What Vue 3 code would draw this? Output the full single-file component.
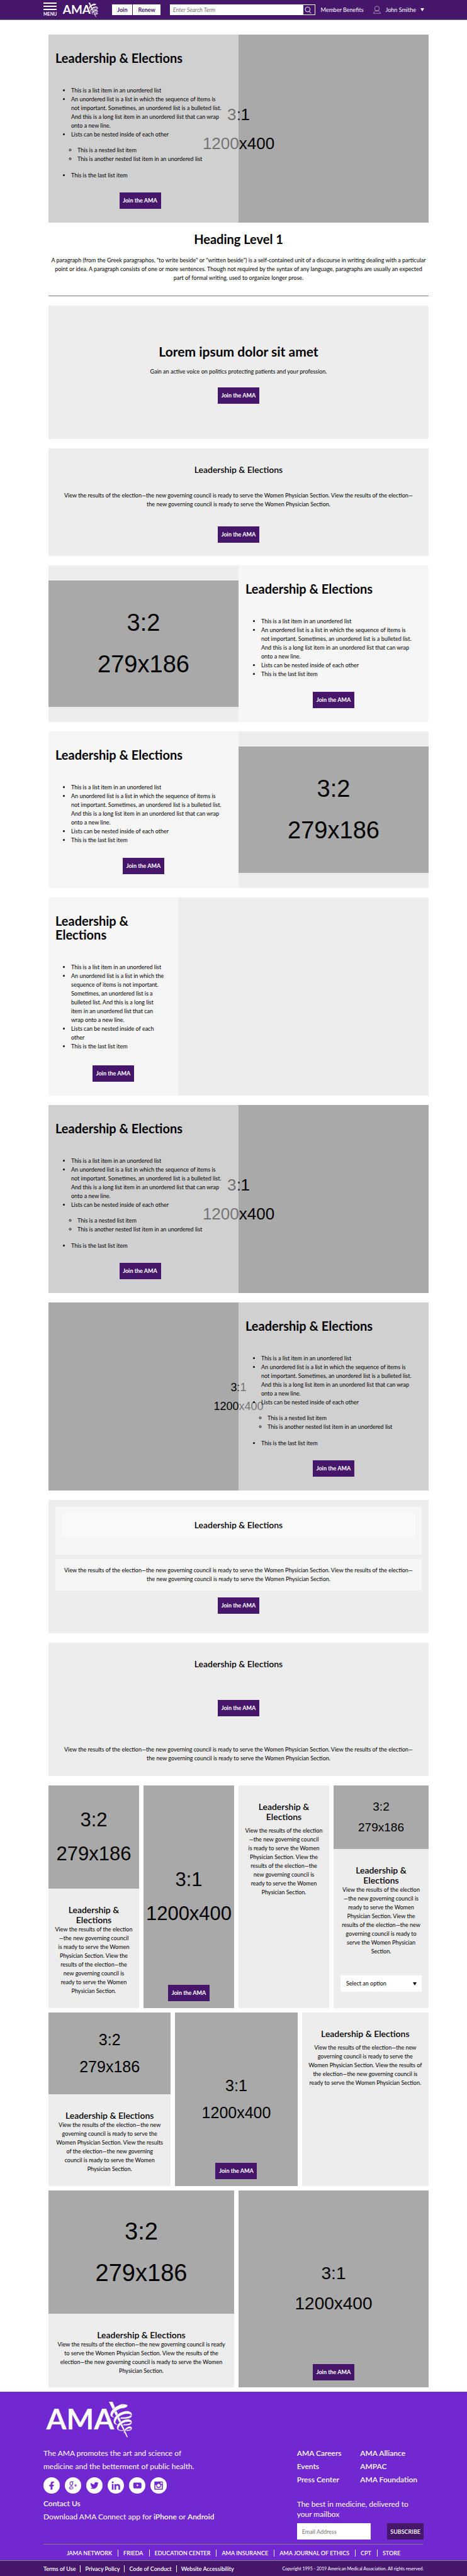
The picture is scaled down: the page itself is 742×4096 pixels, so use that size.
<script setup>
const blurb =
  'View the results of the election—the new governing council is ready to serve the Women Physician Section. View the results of the election—the new governing council is ready to serve the Women Physician Section.'

const narrowBlurb = `View the results of the election
—the new governing council
is ready to serve the Women
Physician Section. View the
results of the election—the
new governing council is
ready to serve the Women
Physician Section.`

const selectBlurb = `View the results of the election
—the new governing council is
ready to serve the Women
Physician Section. View the
results of the election—the new
governing council is ready to
serve the Women Physician
Section.`

const thirdBlurb = `View the results of the election—the new
governing council is ready to serve the
Women Physician Section. View the results
of the election—the new governing
council is ready to serve the Women
Physician Section.`

const thirdTextBlurb = `View the results of the election—the new
governing council is ready to serve the
Women Physician Section. View the results of
the election—the new governing council is
ready to serve the Women Physician Section.`

const halfBlurb = `View the results of the election—the new governing council is ready
to serve the Women Physician Section. View the results of the
election—the new governing council is ready to serve the Women
Physician Section.`

const items = [
  { text: 'This is a list item in an unordered list' },
  {
    text: `An unordered list is a list in which the sequence of items is
not important. Sometimes, an unordered list is a bulleted list.
And this is a long list item in an unordered list that can wrap
onto a new line.`
  },
  { text: 'Lists can be nested inside of each other' },
  { text: 'This is the last list item' }
]

const narrowItems = [
  items[0],
  {
    text: `An unordered list is a list in which the
sequence of items is not important.
Sometimes, an unordered list is a
bulleted list. And this is a long list
item in an unordered list that can
wrap onto a new line.`
  },
  { text: `Lists can be nested inside of each
other` },
  items[3]
]

const nestedItems = items.map((item, i) =>
  i === 2
    ? { ...item, children: ['This is a nested list item', 'This is another nested list item in an unordered list'] }
    : item
)

const features = [
  { kind: 'split flip', items },
  { kind: 'split', items },
  { kind: 'third', items: narrowItems },
  { kind: 'cover', items: nestedItems },
  { kind: 'cover flip', items: nestedItems }
]

const staff = 'M227 22H238L283.500 127.500H280.500Z'
const coils = [
  'M283 33C281 29 274 29.500 268 28C256 30 231 44 231 60C231 65 236 69 245 69C240 67 238 65 238 62C240 54 251 45 266 41.500C274 42 283 38 283 33Z',
  'M296 61C297 70 285 73 275 73C268 73 262 73 260 72L264 67.500C274 69 287 67 293 61Z',
  'M296 61C296 54 289 49.300 281 49.300C265 49.300 241 62 241 81C241 87 245 91 257 92C250 89 246 86 247 82C249 70 266 58.500 281 58.300C289 58 293 60 294.500 64Z',
  'M296 83C296 90 288 92.500 281 92.700C275 93 270 93 268.500 92.500L272 88C280 89 288 88 293 83Z',
  'M296 83C296 77 290 74 283 74C270 74 250.700 85 250.700 99C250.700 106 256 109.500 271 109.300L270 106C262 107 255.500 106 255.500 102C257 92 270 82.500 284 82C290 82 294 83 295 86Z',
  'M296 101C296 108 288 109.700 277 109.300L280 105C286 106 292 105 294 101Z',
  'M296 101C296 97 292 95 289 95C281 95 271 105 271 112C271 115 271.500 117.500 272 118C273 112 279 102.500 288 102C292 102 294 103 295 104Z'
]

const careers = ['AMA Careers', 'AMA Alliance', 'Events', 'AMPAC', 'Press Center', 'AMA Foundation']
const network = ['JAMA NETWORK', 'FRIEDA', 'EDUCATION CENTER', 'AMA INSURANCE', 'AMA JOURNAL OF ETHICS', 'CPT', 'STORE']
const legal = ['Terms of Use', 'Privacy Policy', 'Code of Conduct', 'Website Accessibility']
</script>

<template>
  <header class="top">
    <button class="menu" type="button">
      <span class="bars"><i></i><i></i><i></i></span>
      MENU
    </button>
    <a class="brand" href="#" aria-label="AMA">
      <svg viewBox="32 22 266 107">
        <text x="243" y="105" text-anchor="end" class="logo-text">AMA</text>
        <path :d="staff" />
        <path v-for="d in coils" :key="d" :d="d" class="coil" />
      </svg>
    </a>
    <div class="join">
      <button type="button">Join</button>
      <button type="button">Renew</button>
    </div>
    <form class="search" @submit.prevent>
      <input type="search" aria-label="Search" placeholder="Enter Search Term" />
      <button type="submit" aria-label="Search">
        <svg viewBox="0 0 35 28"><circle cx="14" cy="12" r="8" /><path d="M19 18L25 25" /></svg>
      </button>
    </form>
    <a class="benefits" href="#">Member Benefits</a>
    <button class="user" type="button">
      <svg viewBox="0 0 24 26"><circle cx="12" cy="9" r="7.500" /><path d="M1 24.500C2 19 6 16.500 12 16.500S22 19 23 24.500Z" /></svg>
      John Smithe
      <span class="caret white"></span>
    </button>
  </header>

  <main>
    <section class="feature cover">
      <div class="photo"><span>3:1</span><span>1200x400</span></div>
      <div class="copy">
        <h2>Leadership &amp; Elections</h2>
        <ul>
          <li v-for="item in nestedItems" :key="item.text">
            <span>{{ item.text }}</span>
            <ul v-if="item.children">
              <li v-for="child in item.children" :key="child">{{ child }}</li>
            </ul>
          </li>
        </ul>
        <button class="btn" type="button">Join the AMA</button>
      </div>
    </section>

    <section class="intro">
      <h1>Heading Level 1</h1>
      <p>
        A paragraph (from the Greek paragraphos, "to write beside" or "written beside") is a self-contained unit of a
        discourse in writing dealing with a particular<br />
        point or idea. A paragraph consists of one or more sentences. Though not required by the syntax of any language,
        paragraphs are usually an expected<br />
        part of formal writing, used to organize longer prose.
      </p>
    </section>
    <hr />

    <section class="block lorem">
      <h2>Lorem ipsum dolor sit amet</h2>
      <p>Gain an active voice on politics protecting patients and your profession.</p>
      <button class="btn" type="button">Join the AMA</button>
    </section>

    <section class="block plain">
      <h3>Leadership &amp; Elections</h3>
      <p>{{ blurb }}</p>
      <button class="btn" type="button">Join the AMA</button>
    </section>

    <section v-for="(f, i) in features" :key="i" class="feature" :class="f.kind">
      <div class="photo">
        <template v-if="f.kind.startsWith('cover')"><span>3:1</span><span>1200x400</span></template>
        <div v-else-if="f.kind.startsWith('split')" class="ph large"><span>3:2</span><span>279x186</span></div>
      </div>
      <div class="copy">
        <h2>Leadership &amp; Elections</h2>
        <ul>
          <li v-for="item in f.items" :key="item.text">
            <span>{{ item.text }}</span>
            <ul v-if="item.children">
              <li v-for="child in item.children" :key="child">{{ child }}</li>
            </ul>
          </li>
        </ul>
        <button class="btn" type="button">Join the AMA</button>
      </div>
    </section>

    <section class="block boxed">
      <div class="box">
        <h3>Leadership &amp; Elections</h3>
      </div>
      <p>{{ blurb }}</p>
      <button class="btn" type="button">Join the AMA</button>
    </section>

    <section class="block reversed">
      <h3>Leadership &amp; Elections</h3>
      <button class="btn" type="button">Join the AMA</button>
      <p>{{ blurb }}</p>
    </section>

    <div class="cards four">
      <article>
        <div class="ph tall"><span>3:2</span><span>279x186</span></div>
        <h3>Leadership &amp; Elections</h3>
        <p>{{ narrowBlurb }}</p>
      </article>
      <article class="dark">
        <div class="ph tall"><span>3:1</span><span>1200x400</span></div>
        <button class="btn" type="button">Join the AMA</button>
      </article>
      <article class="text">
        <h3>Leadership &amp; Elections</h3>
        <p>{{ narrowBlurb }}</p>
      </article>
      <article>
        <div class="ph small"><span>3:2</span><span>279x186</span></div>
        <h3>Leadership &amp; Elections</h3>
        <p>{{ selectBlurb }}</p>
        <div class="select">
          <select aria-label="Option">
            <option>Select an option</option>
          </select>
          <span class="caret"></span>
        </div>
      </article>
    </div>

    <div class="cards three">
      <article>
        <div class="ph medium"><span>3:2</span><span>279x186</span></div>
        <h3>Leadership &amp; Elections</h3>
        <p>{{ thirdBlurb }}</p>
      </article>
      <article class="dark">
        <div class="ph medium"><span>3:1</span><span>1200x400</span></div>
        <button class="btn" type="button">Join the AMA</button>
      </article>
      <article class="text">
        <h3>Leadership &amp; Elections</h3>
        <p>{{ thirdTextBlurb }}</p>
      </article>
    </div>

    <div class="cards two">
      <article>
        <div class="ph large"><span>3:2</span><span>279x186</span></div>
        <h3>Leadership &amp; Elections</h3>
        <p>{{ halfBlurb }}</p>
      </article>
      <article class="dark">
        <div class="ph wide"><span>3:1</span><span>1200x400</span></div>
        <button class="btn" type="button">Join the AMA</button>
      </article>
    </div>
  </main>

  <footer>
    <div class="inner">
      <a class="brand" href="#" aria-label="AMA">
        <svg viewBox="32 22 266 107">
          <text x="243" y="105" text-anchor="end" class="logo-text">AMA</text>
          <path :d="staff" />
          <path v-for="d in coils" :key="d" :d="d" class="coil" />
          <circle cx="268" cy="31.500" r="1.200" class="eye" />
        </svg>
      </a>
      <div class="columns">
        <div class="about">
          <p>The AMA promotes the art and science of<br />medicine and the betterment of public health.</p>
          <nav class="social" aria-label="Social">
            <a href="#" aria-label="Facebook">
              <svg viewBox="0 0 50 50"><path d="M32 13H29C24 13 22 16 22 20V23H18V28H22V38H27.500V28H31L32 23H27.500V20.500C27.500 18.500 28.500 17.500 30 17.500H32Z" /></svg>
            </a>
            <a href="#" aria-label="Google Plus">
              <svg viewBox="0 0 50 50"><g class="line"><ellipse cx="20" cy="19" rx="4.500" ry="5" /><path d="M20 13.500H27M22 24C18 26 18 27 22 29C27 31 26 36 19 36C12 36 12 30 20 29.500M29 25H37M33 21V29" /></g></svg>
            </a>
            <a href="#" aria-label="Twitter">
              <svg viewBox="0 0 50 50"><path d="M14 17C17 20 21 22 25 22C24 17 28 15 30 15C32 15 33 16 34 17L37 15.500L35.500 18.500L37.500 18L35 21C35 29 29 35 22 35C18 35 15 34 13 33C16 33 18 32 20 31C17 31 16 29 15 27H17C14 26 13 24 13 22L15 22.500C13 21 13 19 14 17Z" /></svg>
            </a>
            <a href="#" aria-label="LinkedIn">
              <svg viewBox="0 0 50 50"><circle cx="15.500" cy="15.500" r="3" /><path d="M13 21H18V38H13ZM21 21H26V23.500C29 19 38 20 38 28V38H33V29C33 24 26 24 26 29V38H21Z" /></svg>
            </a>
            <a href="#" aria-label="YouTube">
              <svg viewBox="0 0 50 50"><path fill-rule="evenodd" d="M16 16.500H35Q38 17 38 20V30Q38 33.500 35 34H16Q13 33.500 13 30V20Q13 17 16 16.500ZM23.500 21V28L30 24.500Z" /></svg>
            </a>
            <a href="#" aria-label="Instagram">
              <svg viewBox="0 0 50 50"><path fill-rule="evenodd" d="M14 13H36Q38 13 38 15V36Q38 38 36 38H14Q12 38 12 36V15Q12 13 14 13ZM31 16V20H36V16ZM15 24V35H35V24H32C34 36 16 36 18 24ZM25 20A5 5 0 1 0 25.100 20Z" /></svg>
            </a>
          </nav>
          <p><a href="#">Contact Us</a></p>
          <p>Download AMA Connect app for <a href="#">iPhone</a> or <a href="#">Android</a></p>
        </div>
        <div class="more">
          <nav class="careers" aria-label="AMA sites">
            <a v-for="link in careers" :key="link" href="#">{{ link }}</a>
          </nav>
          <form @submit.prevent>
            <label for="email">The best in medicine, delivered to<br />your mailbox</label>
            <div class="signup">
              <input id="email" type="email" placeholder="Email Address" />
              <button type="submit">SUBSCRIBE</button>
            </div>
          </form>
        </div>
      </div>
      <nav class="network bar" aria-label="Network">
        <a v-for="link in network" :key="link" href="#">{{ link }}</a>
      </nav>
    </div>
    <div class="bottom">
      <nav class="legal bar" aria-label="Legal">
        <a v-for="link in legal" :key="link" href="#">{{ link }}</a>
      </nav>
      <small>Copyright 1995 - 2019 American Medical Association. All rights reserved.</small>
    </div>
  </footer>
</template>

<style>
body {
  margin: 0;
  background: #fff;
}
#app {
  font-family: Lato, 'Open Sans', sans-serif;
  font-size: 9px;
  line-height: 14px;
  color: #000;
}
</style>

<style scoped>
h1, h2, h3, p, ul { margin: 0; padding: 0; }
a { color: inherit; text-decoration: none; }
button, input, select { font: inherit; border: 0; border-radius: 0; margin: 0; padding: 0; }
button { cursor: pointer; }
.logo-text { font-family: Lato, sans-serif; font-weight: 700; font-size: 87px; }
.coil { stroke: var(--ground); stroke-width: 1; }
.eye { fill: var(--ground); }

.top {
  --ground: #46166b;
  display: flex;
  align-items: center;
  height: 31px;
  padding: 0 68px 0 69px;
  background: #46166b;
  border-bottom: 1px solid #808080;
  color: #fff;
}
.menu {
  display: flex;
  flex-direction: column;
  align-items: center;
  background: none;
  color: #fff;
  font-size: 7px;
  line-height: 9px;
  font-weight: 700;
}
.bars { display: grid; gap: 3px; margin-bottom: 2px; }
.bars i { width: 21px; height: 2px; background: #fff; }
.top .brand { margin-left: 8px; }
.brand svg { display: block; fill: #fff; overflow: visible; }
.top .brand svg { width: 58px; height: 24px; }
.join { display: flex; gap: 1px; margin-left: 22px; }
.join button {
  height: 17px;
  padding: 0 8px;
  background: #fff;
  color: #46166b;
  font-weight: 700;
}
.search {
  display: flex;
  flex: 1;
  height: 17px;
  margin-left: 15px;
  background: #fff;
}
.search input { flex: 1; min-width: 0; padding: 0 5px; background: #fff; }
.search input::placeholder { color: #757575; font-style: italic; opacity: 1; }
.search button { width: 20px; background: #46166b; border: 1px solid #fff; }
.search svg { display: block; width: 17px; height: 14px; fill: none; stroke: #fff; stroke-width: 2; }
.benefits { margin-left: 9px; }
.user {
  display: flex;
  align-items: center;
  margin-left: 15px;
  background: none;
  color: #fff;
}
.user svg { width: 12px; height: 13px; margin-right: 8px; fill: none; stroke: #fff; stroke-width: 1; }
.caret {
  border-left: 3px solid transparent;
  border-right: 3px solid transparent;
  border-top: 5px solid #000;
}
.caret.white { margin-left: 7px; border-top-color: #fff; }

main { display: flow-root; margin: 0 61px 0 77px; padding-bottom: 7px; }
h1, h2 { font-size: 20px; line-height: 22px; font-weight: 700; }
h3 { font-size: 14px; line-height: 16px; font-weight: 600; }

.btn {
  display: block;
  width: 66px;
  height: 26px;
  margin: 0 auto;
  background: #46166b;
  color: #fff;
  font-weight: 700;
  white-space: nowrap;
}

.feature { position: relative; display: grid; grid-template-columns: 1fr 1fr; margin-top: 15px; background: #ededed; }
.feature:first-child { margin-top: 23px; }
.feature .copy { grid-area: 1 / 1; padding: 26px 11px 22px; background: #f6f6f6; }
.feature .photo { grid-area: 1 / 2; align-self: center; }
.feature.flip .copy { grid-column: 2; }
.feature.flip .photo { grid-column: 1; }
.feature.third { grid-template-columns: 206px 1fr; }
.feature.third .copy > ul { margin-bottom: 23px; }
.feature h2 { margin-bottom: 34px; }
.feature .copy > ul { margin-bottom: 21px; padding-left: 25px; }
.feature li > span { white-space: pre-line; }
.feature ul ul { margin: 11px 0 12px; padding-left: 10px; }
.cover > .photo,
.cover.flip > .photo {
  grid-area: 1 / 1 / 2 / 3;
  align-self: stretch;
  display: flex;
  flex-direction: column;
  align-items: center;
  justify-content: center;
  background: #a9a9a9;
  font: 26px/46px 'Liberation Sans', Arial, sans-serif;
}
.cover.flip > .photo { font-size: 18px; line-height: 30px; }
.cover > .copy { position: relative; background: rgba(255, 255, 255, 0.45); }
.cover:not(.flip) > .copy { padding-right: 22px; }
.cover .copy > ul { margin-bottom: 20px; }
.cover:not(.flip) .copy > ul { margin-right: -11px; }

.ph {
  display: flex;
  flex-direction: column;
  align-items: center;
  justify-content: center;
  aspect-ratio: 3 / 2;
  background: #a9a9a9;
  font-family: 'Liberation Sans', Arial, sans-serif;
}
.ph.large { font-size: 38px; line-height: 66px; }
.ph.wide { font-size: 28px; line-height: 48px; }
.ph.medium { font-size: 25px; line-height: 43px; }
.ph.small { font-size: 19px; line-height: 33px; }
.ph.tall { height: 164px; aspect-ratio: auto; font-size: 31px; line-height: 54px; }

.intro { text-align: center; }
.intro h1 { margin: 15px 0 16px; }
hr { height: 1px; margin: 21px 0 0; border: 0; background: #808080; }

.block { margin-top: 15px; background: #ededed; text-align: center; }
.lorem { padding: 62px 11px 56px; }
.lorem h2 { font-size: 21px; }
.lorem p { margin: 14px 0 18px; }
.plain { padding: 26px 22px 21px; }
.plain p { margin: 26px 0 28px; }
.boxed { padding: 11px 11px 31px; }
.box { padding: 10px 10px 29px; background: #f6f6f6; }
.box h3 { padding: 11px 0 10px; background: #fafafa; }
.boxed p { margin: 7px 0 11px; padding: 11px; background: #f6f6f6; }
.reversed { padding: 26px 22px 21px; }
.reversed .btn { margin: 49px auto 46px; }

.cards { display: grid; gap: 7px 0; margin-top: 7px; text-align: center; }
.cards.four { grid-template-columns: repeat(4, 1fr); margin-top: 15px; }
.cards.three { grid-template-columns: repeat(3, 1fr); }
.cards.two { grid-template-columns: repeat(2, 1fr); }
.cards article { display: flex; flex-direction: column; padding-bottom: 20px; background: #ededed; }
.cards.two article { padding-bottom: 19px; }
.cards article:not(:last-child) { margin-right: 7px; }
.cards h3 { margin: 26px 11px 0; }
.cards p { margin: 0 3px; white-space: pre-line; }
.cards .text p { margin-top: 7px; }
.cards article.dark { position: relative; padding: 0; background: #a9a9a9; }
.cards .dark .ph { flex: 1; aspect-ratio: auto; }
.cards .dark .btn { position: absolute; left: 0; right: 0; bottom: 11px; }
.select { position: relative; margin: auto 11px 6px; }
.select select {
  display: block;
  width: 100%;
  height: 26px;
  padding: 0 9px;
  appearance: none;
  background: #fff;
  color: #000;
}
.select .caret { position: absolute; right: 8px; top: 11px; }

footer { --ground: #7128d0; background: #7128d0; color: #fff; }
footer .inner { padding: 16px 69px 0; }
footer .brand svg { width: 142px; height: 57px; }
.columns { display: grid; grid-template-columns: 2fr 1fr; margin-top: 14px; font-size: 12px; line-height: 21px; }
.columns a { font-weight: 600; }
.social { display: flex; gap: 8px; margin: 7px 0 5px; }
.social svg { display: block; width: 26px; height: 26px; border-radius: 50%; background: #fff; fill: var(--ground); }
.social .line { fill: none; stroke: var(--ground); stroke-width: 2; }
.careers { display: grid; grid-template-columns: 1fr 1fr; margin-bottom: 21px; white-space: nowrap; }
.more label { display: block; line-height: 16px; }
.signup { display: flex; justify-content: space-between; margin-top: 6px; font-size: 9px; }
.signup input { width: 117px; height: 26px; box-sizing: border-box; padding: 0 8px; background: #fff; }
.signup input::placeholder { color: #757575; opacity: 1; }
.signup button { padding: 0 5px; background: #46166b; color: #fff; font-weight: 600; }
.bar { display: flex; white-space: nowrap; }
.bar a { font-weight: 600; line-height: 11px; }
.bar a + a { margin-left: 7px; padding-left: 7px; border-left: 1px solid #fff; }
.network { justify-content: center; margin-top: 7px; padding: 8px 0 6px; border-top: 1px solid #808080; }
.network a + a { margin-left: 9px; padding-left: 8px; }
.bottom {
  display: flex;
  align-items: center;
  justify-content: space-between;
  height: 24px;
  padding: 0 69px;
  border-top: 1px solid #808080;
  background: #46166b;
}
.bottom small { font-size: 7px; }
</style>
